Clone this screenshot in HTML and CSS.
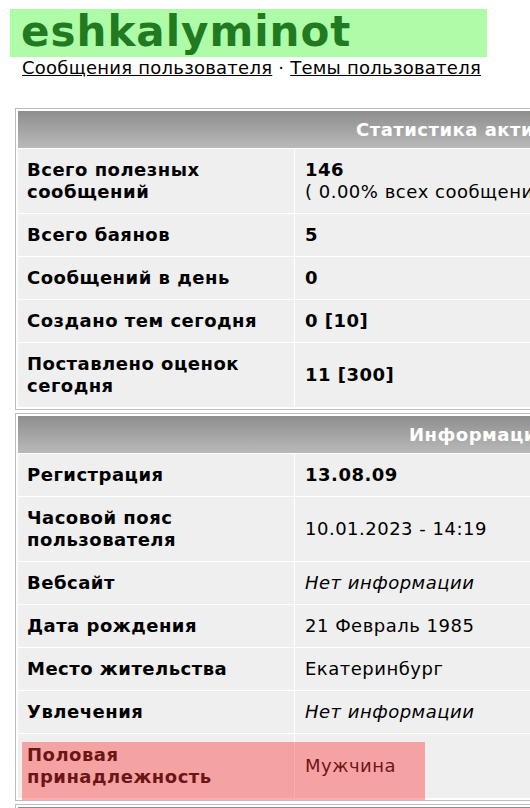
FILE: index.html
```html
<!DOCTYPE html>
<html lang="ru">
<head>
<meta charset="utf-8">
<title>eshkalyminot</title>
<link rel="stylesheet" href="styles.css">
</head>
<body>
<div class="page">
  <h1 class="title">eshkalyminot</h1>
  <div class="links"><a href="#">Сообщения пользователя</a> · <a href="#">Темы пользователя</a></div>

  <table class="box">
    <tr><th colspan="2" class="head head-stats">Статистика активности</th></tr>
    <tr><td class="key">Всего полезных сообщений</td><td class="val"><b>146</b><br>( 0.00% всех сообщений )</td></tr>
    <tr><td class="key">Всего баянов</td><td class="val"><b>5</b></td></tr>
    <tr><td class="key">Сообщений в день</td><td class="val"><b>0</b></td></tr>
    <tr><td class="key">Создано тем сегодня</td><td class="val"><b>0 [10]</b></td></tr>
    <tr><td class="key">Поставлено оценок сегодня</td><td class="val"><b>11 [300]</b></td></tr>
  </table>

  <table class="box">
    <tr><th colspan="2" class="head head-info">Информация</th></tr>
    <tr><td class="key">Регистрация</td><td class="val"><b>13.08.09</b></td></tr>
    <tr><td class="key">Часовой пояс пользователя</td><td class="val">10.01.2023 - 14:19</td></tr>
    <tr><td class="key">Вебсайт</td><td class="val"><i>Нет информации</i></td></tr>
    <tr><td class="key">Дата рождения</td><td class="val">21 Февраль 1985</td></tr>
    <tr><td class="key">Место жительства</td><td class="val">Екатеринбург</td></tr>
    <tr><td class="key">Увлечения</td><td class="val"><i>Нет информации</i></td></tr>
    <tr><td class="key">Половая принадлежность</td><td class="val">Мужчина</td></tr>
  </table>

  <table class="box">
    <tr><th colspan="2" class="head">&nbsp;</th></tr>
  </table>

  <div class="mark"></div>
</div>
</body>
</html>
```

FILE: styles.css
```css
html, body {
  margin: 0;
  padding: 0;
  background: #ffffff;
  overflow: hidden;
}

.page {
  position: relative;
  padding: 9px 0 0 10px;
  font-family: "DejaVu Sans", Verdana, sans-serif;
  color: #000;
  width: 1200px;
}

.title {
  margin: 0;
  width: 466px;
  height: 48px;
  padding-left: 11px;
  background: #aefba8;
  color: #217a20;
  font-size: 42px;
  font-weight: bold;
  letter-spacing: 1px;
  line-height: 46px;
}

.links {
  margin-left: 12px;
  font-size: 18px;
  letter-spacing: 0.25px;
  line-height: 22px;
}

.links a {
  color: #000;
  text-decoration: underline;
}

.box {
  margin: 0 0 0 5px;
  width: 950px;
  border: 1px solid #bdbdbd;
  border-spacing: 1px;
  padding: 1px;
  font-size: 18px;
  letter-spacing: 0.5px;
  line-height: 22px;
}

.box:first-of-type {
  margin-top: 29px;
}

.box + .box {
  margin-top: 3px;
}

.head {
  height: 37px;
  padding: 0;
  text-align: left;
  color: #ffffff;
  font-weight: bold;
  background: linear-gradient(#8e8e8e, #b9b9b9);
}

.head-stats { padding-left: 338px; }
.head-info { padding-left: 391px; }

.key, .val {
  background: #efefef;
  padding: 10px 11px;
  vertical-align: middle;
}

.key {
  width: 256px;
  padding-left: 9px;
  font-weight: bold;
}

.val {
  padding-left: 10px;
}

.mark {
  position: absolute;
  left: 22px;
  top: 742px;
  width: 403px;
  height: 58px;
  background: rgba(255, 54, 54, 0.41);
}
```
